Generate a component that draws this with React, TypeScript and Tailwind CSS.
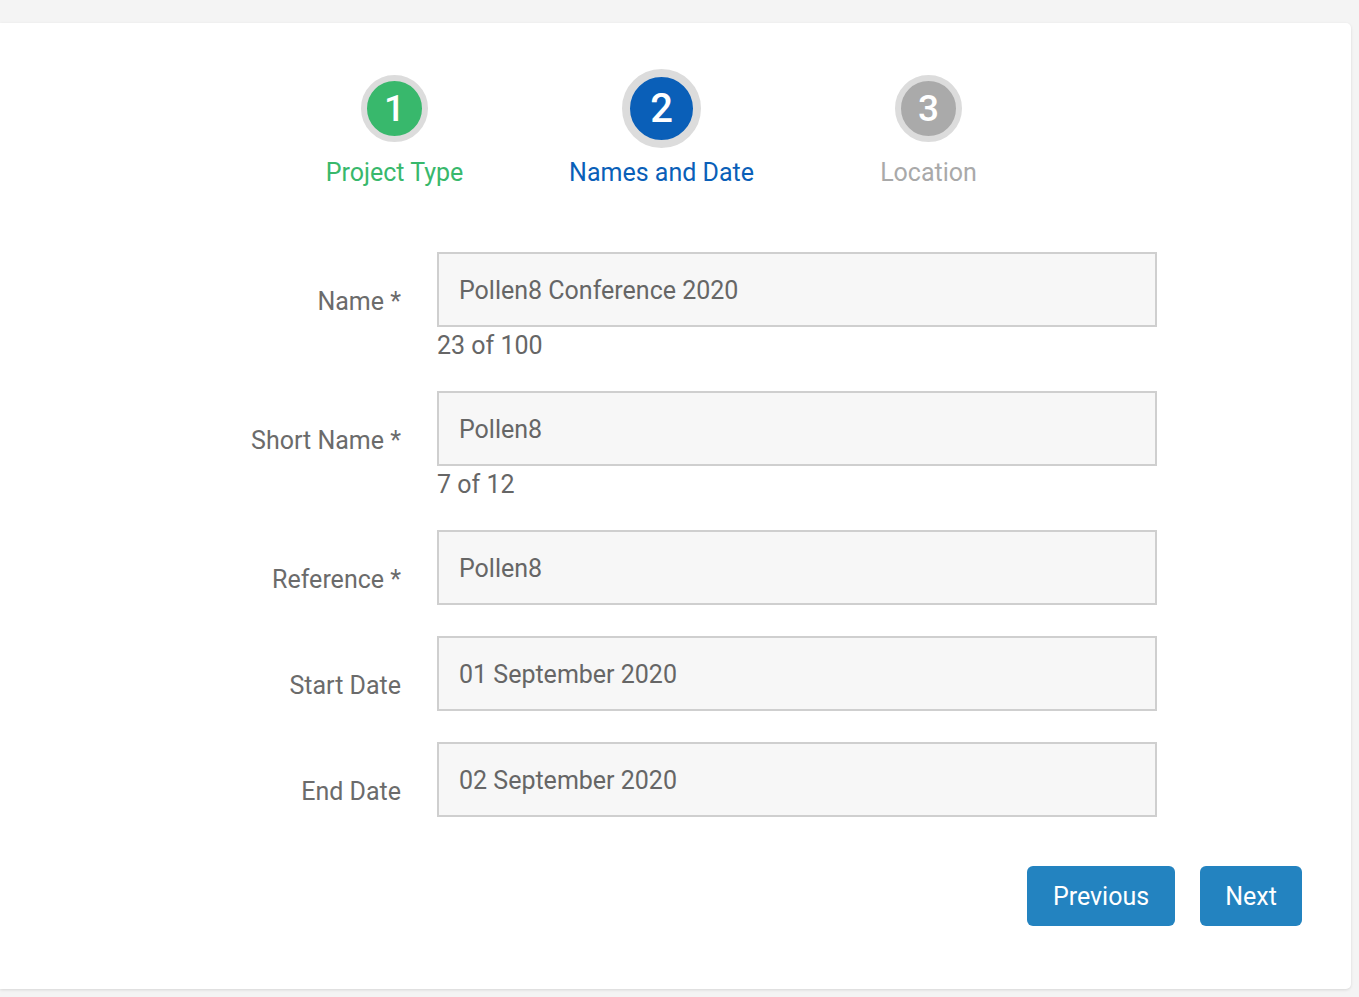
import React from "react"

const steps = [
  { n: 1, label: "Project Type", state: "done" },
  { n: 2, label: "Names and Date", state: "active" },
  { n: 3, label: "Location", state: "todo" },
]

const fields = [
  { label: "Name *", value: "Pollen8 Conference 2020", counter: "23 of 100" },
  { label: "Short Name *", value: "Pollen8", counter: "7 of 12" },
  { label: "Reference *", value: "Pollen8" },
  { label: "Start Date", value: "01 September 2020" },
  { label: "End Date", value: "02 September 2020" },
]

function Step({ n, label, state }: { n: number; label: string; state: string }) {
  const active = state === "active"
  const ring = active
    ? "w-[79px] h-[79px] border-[8px] text-[40px]"
    : "w-[67px] h-[67px] border-[6px] text-[37px]"
  const fill =
    state === "done" ? "bg-[#38b86c]" : active ? "bg-[#0a5fb8]" : "bg-[#aaaaaa]"
  const text =
    state === "done" ? "text-[#38b86c]" : active ? "text-[#0a5fb8]" : "text-[#a9a9a9]"
  return (
    <div className="w-[267px] flex flex-col items-center">
      <div className="h-[79px] flex items-center justify-center">
        <div
          className={`${ring} ${fill} rounded-full border-[#dcdcdc] flex items-center justify-center text-white font-medium leading-none`}
        >
          {n}
        </div>
      </div>
      <div className={`mt-[10px] text-[25px] leading-[30px] ${text}`}>{label}</div>
    </div>
  )
}

export default function App() {
  return (
    <div
      className="min-h-[997px] bg-[#f4f4f4] pt-[23px] pr-[8px] pb-[8px]"
      style={{ fontFamily: "Roboto, 'Liberation Sans', sans-serif" }}
    >
      <div className="bg-white rounded-r-[5px] shadow-[0_1px_3px_rgba(0,0,0,0.12)] h-[966px] pt-[46px]">
        <div className="flex pl-[261px]">
          {steps.map((s) => (
            <Step key={s.n} {...s} />
          ))}
        </div>

        <div className="mt-[64px] flex flex-col">
          {fields.map((f, i) => (
            <div key={i} className={`flex ${f.counter ? "mb-[30px]" : "mb-[31px]"}`}>
              <div className="w-[401px] text-right text-[25px] text-[#6b6b6b] pt-[36px] leading-[28px]">
                {f.label}
              </div>
              <div className="ml-[36px] w-[720px]">
                <div className="h-[75px] border-2 border-[#cfcfcf] bg-[#f7f7f7] flex items-center px-[20px] pt-[2px] text-[25px] text-[#666666]">
                  {f.value}
                </div>
                {f.counter && (
                  <div className="text-[25px] text-[#666666] leading-[30px] mt-[4px]">
                    {f.counter}
                  </div>
                )}
              </div>
            </div>
          ))}
        </div>

        <div className="flex justify-end gap-[25px] pr-[49px] mt-[18px]">
          <button className="h-[60px] w-[148px] rounded-[6px] bg-[#2383c0] text-white text-[25px] pt-[2px]">
            Previous
          </button>
          <button className="h-[60px] w-[102px] rounded-[6px] bg-[#2383c0] text-white text-[25px] pt-[2px]">
            Next
          </button>
        </div>
      </div>
    </div>
  )
}
